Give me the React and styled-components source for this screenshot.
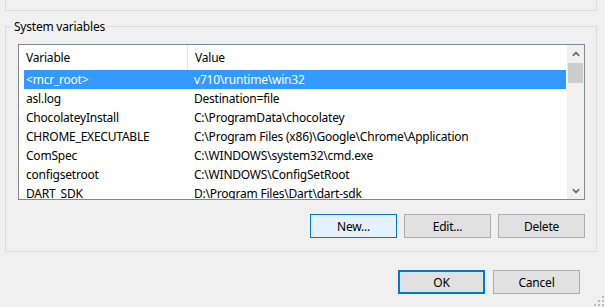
import React from "react";
import styled, { createGlobalStyle } from "styled-components";

const GlobalStyle = createGlobalStyle`
  html, body {
    margin: 0;
    padding: 0;
    background: #f0f0f0;
    overflow: hidden;
  }
  body {
    font-family: "Noto Sans", "Segoe UI", sans-serif;
    font-size: 12px;
    letter-spacing: -0.22px;
    color: #000;
  }
`;

const Window = styled.div`
  width: 605px;
  height: 307px;
  display: flex;
  flex-direction: column;
  background: #f0f0f0;
`;

const TopGroup = styled.div`
  height: 10px;
  margin: 0 8px 0 5px;
  border: 1px solid #dcdcdc;
  border-top: none;
`;

const Group = styled.div`
  box-sizing: border-box;
  height: 226px;
  margin: 15px 8px 0 5px;
  padding: 0 11px 0 12px;
  border: 1px solid #dcdcdc;
  display: flex;
  flex-direction: column;
`;

const Legend = styled.div`
  align-self: flex-start;
  height: 16px;
  line-height: 16px;
  margin: -8px 0 0 -6px;
  padding: 0 2px;
  background: #f0f0f0;
  white-space: nowrap;
`;

const List = styled.div`
  box-sizing: border-box;
  height: 156px;
  margin-top: 9px;
  border: 1px solid #828790;
  background: #fff;
  display: flex;
`;

const ListBody = styled.div`
  flex: 1;
  overflow: hidden;
  display: flex;
  flex-direction: column;
`;

const Header = styled.div`
  flex: none;
  height: 25px;
  display: grid;
  grid-template-columns: 169px 1fr;
`;

const HeaderCell = styled.div`
  line-height: 25px;
  padding-left: 7px;
  border-right: ${(p) => (p.$divider ? "1px solid #e5e5e5" : "none")};
  white-space: nowrap;
`;

const Row = styled.div`
  flex: none;
  height: 19px;
  margin: 0 1px 0 5px;
  display: grid;
  grid-template-columns: 163px 1fr;
  background: ${(p) => (p.$selected ? "#3399ff" : "transparent")};
  color: ${(p) => (p.$selected ? "#fff" : "#000")};
`;

const Cell = styled.div`
  line-height: 19px;
  padding-left: ${(p) => (p.$value ? "7px" : "2px")};
  white-space: nowrap;
  overflow: hidden;
`;

const ScrollBar = styled.div`
  flex: none;
  width: 17px;
  background: #f0f0f0;
  display: flex;
  flex-direction: column;
`;

const ArrowBox = styled.div`
  flex: none;
  height: 17px;
  display: flex;
  align-items: center;
  justify-content: center;
`;

const Thumb = styled.div`
  flex: none;
  height: 20px;
  margin: 1px 1px 0 1px;
  background: #cdcdcd;
`;

const Track = styled.div`
  flex: 1;
`;

const ButtonRow = styled.div`
  display: flex;
  justify-content: flex-end;
  gap: 7px;
  margin-top: 14px;
`;

const Button = styled.button`
  box-sizing: border-box;
  width: 87px;
  height: 24px;
  padding: 0;
  font-family: inherit;
  font-size: 12px;
  letter-spacing: inherit;
  color: #000;
  background: ${(p) => (p.$hot ? "#e5f1fb" : "#e1e1e1")};
  border: ${(p) =>
    p.$default ? "2px solid #0078d7" : p.$hot ? "1px solid #0078d7" : "1px solid #adadad"};
  border-radius: 0;
  outline: none;
`;

const Footer = styled.div`
  flex: 1;
  display: flex;
  justify-content: flex-end;
  align-items: flex-start;
  gap: 8px;
  padding-top: 18px;
`;

const Grip = styled.svg`
  align-self: flex-end;
  margin-left: 5px;
  flex: none;
`;

const Chevron = ({ down }) => (
  <svg width="8" height="6" viewBox="0 0 8 6">
    <polyline
      points={down ? "0.8,1.2 4,4.4 7.2,1.2" : "0.8,4.8 4,1.6 7.2,4.8"}
      fill="none"
      stroke="#606060"
      strokeWidth="1.6"
    />
  </svg>
);

const rows = [
  ["<mcr_root>", "v710\\runtime\\win32"],
  ["asl.log", "Destination=file"],
  ["ChocolateyInstall", "C:\\ProgramData\\chocolatey"],
  ["CHROME_EXECUTABLE", "C:\\Program Files (x86)\\Google\\Chrome\\Application"],
  ["ComSpec", "C:\\WINDOWS\\system32\\cmd.exe"],
  ["configsetroot", "C:\\WINDOWS\\ConfigSetRoot"],
  ["DART_SDK", "D:\\Program Files\\Dart\\dart-sdk"],
];

export default function App() {
  return (
    <>
      <GlobalStyle />
      <Window>
        <TopGroup />
        <Group>
          <Legend>System variables</Legend>
          <List>
            <ListBody>
              <Header>
                <HeaderCell $divider>Variable</HeaderCell>
                <HeaderCell>Value</HeaderCell>
              </Header>
              {rows.map(([k, v], i) => (
                <Row key={k} $selected={i === 0}>
                  <Cell>{k}</Cell>
                  <Cell $value>{v}</Cell>
                </Row>
              ))}
            </ListBody>
            <ScrollBar>
              <ArrowBox>
                <Chevron />
              </ArrowBox>
              <Thumb />
              <Track />
              <ArrowBox>
                <Chevron down />
              </ArrowBox>
            </ScrollBar>
          </List>
          <ButtonRow>
            <Button $hot>New...</Button>
            <Button>Edit...</Button>
            <Button>Delete</Button>
          </ButtonRow>
        </Group>
        <Footer>
          <Button $default>OK</Button>
          <Button>Cancel</Button>
          <Grip width="12" height="12" viewBox="0 0 12 12">
            <rect x="9" y="1" width="2" height="2" fill="#bcbcbc" />
            <rect x="5" y="5" width="2" height="2" fill="#bcbcbc" />
            <rect x="9" y="5" width="2" height="2" fill="#bcbcbc" />
            <rect x="1" y="9" width="2" height="2" fill="#bcbcbc" />
            <rect x="5" y="9" width="2" height="2" fill="#bcbcbc" />
            <rect x="9" y="9" width="2" height="2" fill="#bcbcbc" />
          </Grip>
        </Footer>
      </Window>
    </>
  );
}
